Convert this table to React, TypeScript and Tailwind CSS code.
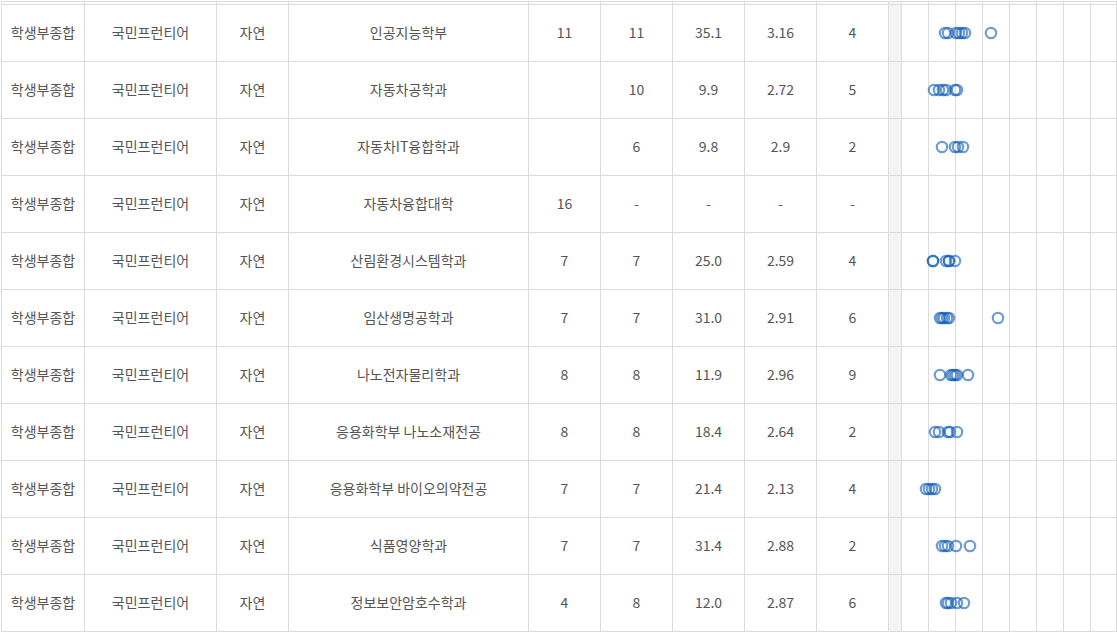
import React from 'react';

type Row = {
  dept: string;
  quota: string;
  recruit: string;
  rate: string;
  grade: string;
  wait: string;
  dots: number[];
};

const rows: Row[] = [
  { dept: '인공지능학부', quota: '11', recruit: '11', rate: '35.1', grade: '3.16', wait: '4', dots: [945, 948, 956, 959, 962, 965, 991] },
  { dept: '자동차공학과', quota: '', recruit: '10', rate: '9.9', grade: '2.72', wait: '5', dots: [934, 939, 943, 946, 955, 957] },
  { dept: '자동차IT융합학과', quota: '', recruit: '6', rate: '9.8', grade: '2.9', wait: '2', dots: [942, 955, 958, 963] },
  { dept: '자동차융합대학', quota: '16', recruit: '-', rate: '-', grade: '-', wait: '-', dots: [] },
  { dept: '산림환경시스템학과', quota: '7', recruit: '7', rate: '25.0', grade: '2.59', wait: '4', dots: [933, 933, 946, 949, 949, 955] },
  { dept: '임산생명공학과', quota: '7', recruit: '7', rate: '31.0', grade: '2.91', wait: '6', dots: [940, 942, 944, 947, 949, 998] },
  { dept: '나노전자물리학과', quota: '8', recruit: '8', rate: '11.9', grade: '2.96', wait: '9', dots: [940, 951, 953, 955, 957, 968] },
  { dept: '응용화학부 나노소재전공', quota: '8', recruit: '8', rate: '18.4', grade: '2.64', wait: '2', dots: [935, 939, 948, 950, 957] },
  { dept: '응용화학부 바이오의약전공', quota: '7', recruit: '7', rate: '21.4', grade: '2.13', wait: '4', dots: [926, 929, 932, 935] },
  { dept: '식품영양학과', quota: '7', recruit: '7', rate: '31.4', grade: '2.88', wait: '2', dots: [942, 945, 948, 956, 970] },
  { dept: '정보보안암호수학과', quota: '4', recruit: '8', rate: '12.0', grade: '2.87', wait: '6', dots: [946, 948, 951, 957, 964] },
];

const gridCols =
  'grid grid-cols-[83px_132px_72px_240px_72px_72px_72px_72px_72px_13px_27px_27px_27px_27px_27px_27px_27px_26px]';

function Cells({ values }: { values: string[] }) {
  return (
    <>
      {values.map((v, i) => (
        <div key={i} className="border-r border-[#dcdcdc] flex items-center justify-center pb-[2px]">
          {v}
        </div>
      ))}
      <div className="border-r border-[#dcdcdc] bg-[#f4f4f4]" />
      {Array.from({ length: 8 }).map((_, i) => (
        <div key={i} className={i === 7 ? '' : 'border-r border-[#dcdcdc]'} />
      ))}
    </>
  );
}

export default function App() {
  return (
    <div className="w-[1117px] h-[632px] bg-white overflow-hidden">
      <div
        className="ml-px mt-px border-t border-l border-r border-[#dcdcdc] text-[14px] text-[#555]"
        style={{ fontFamily: '"Noto Sans CJK KR", "Noto Sans", sans-serif' }}
      >
        {/* tail of the row above */}
        <div className={`${gridCols} h-[3px] border-b border-[#dcdcdc]`}>
          <Cells values={Array(9).fill('')} />
        </div>

        {rows.map((r, idx) => (
          <div key={idx} className={`${gridCols} relative h-[57px] border-b border-[#dcdcdc]`}>
            <Cells values={['학생부종합', '국민프런티어', '자연', r.dept, r.quota, r.recruit, r.rate, r.grade, r.wait]} />
            <svg className="absolute left-0 top-0 pointer-events-none" width="1115" height="56">
              {r.dots.map((x, i) => (
                <circle
                  key={i}
                  cx={x - 2}
                  cy={28}
                  r={5.2}
                  fill="none"
                  stroke="#0d5cb6"
                  strokeOpacity={0.6}
                  strokeWidth={2.2}
                />
              ))}
            </svg>
          </div>
        ))}
      </div>
    </div>
  );
}
